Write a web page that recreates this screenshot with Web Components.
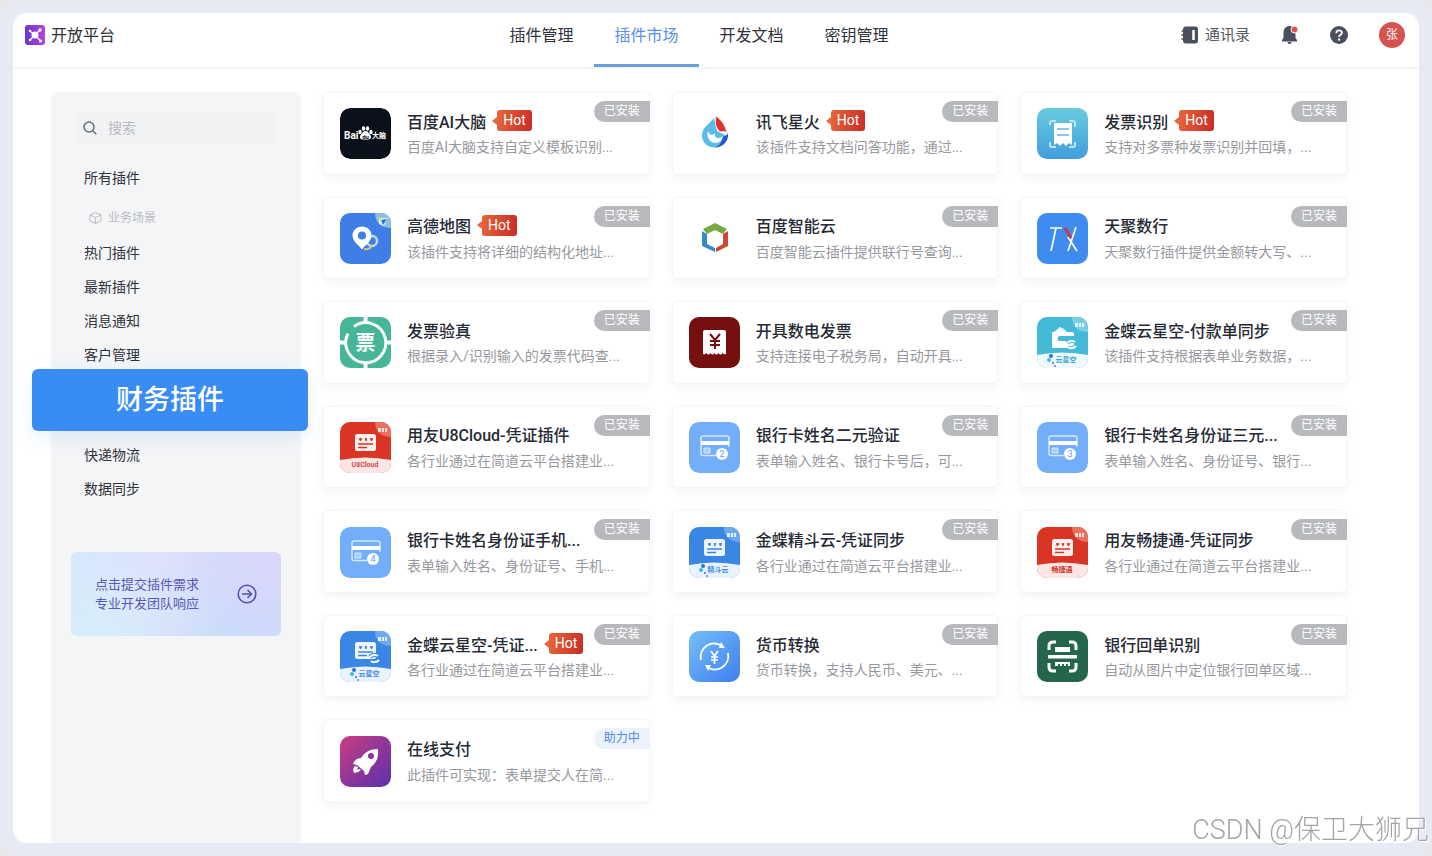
<!DOCTYPE html>
<html lang="zh-CN">
<head>
<meta charset="utf-8">
<meta name="viewport" content="width=device-width, initial-scale=1">
<title>开放平台 - 插件市场</title>
<style>
    * {
        box-sizing: border-box;
    }
    html {
        background-color: #e8e8ea;
    }
    body {
        --blue: #3a8cf5;
        --link: #5a90e6;
        --ink: #30333b;
        --muted: #97999e;
        margin: 0;
        font-family: Roboto, "Noto Sans CJK SC", sans-serif;
        color: var(--ink);
    }
</style>
</head>
<body>
<open-platform></open-platform>

<script>
// the reset names native tags only: a "*" rule would win over the :host rules of nested elements
const baseStyle = `
    * {
        box-sizing: border-box;
    }
    h1, h3, p, ul, li, a, input, button {
        margin: 0;
        padding: 0;
    }
    a {
        color: inherit;
        text-decoration: none;
    }
    button {
        border: none;
        background: none;
        font: inherit;
        color: inherit;
        cursor: pointer;
    }
    svg {
        display: block;
    }
`;

// parts shared by several plugin icons
const cornerTag = (color) => `
    <path d="M35 0H51V15C42 15 35 10 35 0Z" fill="${color}"/>
    <path d="M38 6h3v4h-3zM42 6h2v4h-2zM45 6h2v4h-2z" fill="#fff" opacity=".8"/>
`;

const footer = (fill, color, text, logo) => `
    <path d="M0 38Q25 33 51 38V51H0Z" fill="${fill}"/>
    ${logo ? `
        <circle cx="14" cy="39" r="2" fill="#2c6fe8"/>
        <circle cx="12" cy="43" r="2" fill="#3cc0dd"/>
        <circle cx="16" cy="46" r="1" fill="#2c6fe8"/>
        <circle cx="18" cy="49" r="1" fill="#8a6cf0"/>
        <text x="29" y="45" font-size="7" font-weight="700" text-anchor="middle" fill="${color}">${text}</text>
    ` : `
        <text x="25" y="45" font-size="7" font-weight="700" text-anchor="middle" fill="${color}">${text}</text>
    `}
`;

const voucher = (ink) => `
    <rect x="15" y="12" width="21" height="17" rx="2.500" fill="#fff" opacity=".92"/>
    <path d="M19 17h3M25 17h2M30 17h3M20.500 16v3M26 16v3M31.500 16v3M18 22h15M18 25.500h9" stroke="${ink}" stroke-width="1.500"/>
`;

const bankCard = (number) => `
    <rect width="51" height="51" rx="9" fill="#72aefa"/>
    <path d="M27 33.500H14a2 2 0 0 1-2-2V16a2 2 0 0 1 2-2h24a2 2 0 0 1 2 2v9" fill="none" stroke="#d6e8ff" stroke-width="1.500"/>
    <path d="M12 19h28v4H12z" fill="#fff"/>
    <path d="M15 26h6v5h-6z" fill="#a9cffc" stroke="#d6e8ff"/>
    <circle cx="33" cy="32" r="6" fill="#fff"/>
    <text x="33" y="35" font-size="9" text-anchor="middle" fill="#5c9df5">${number}</text>
`;

const icons = {
    brain: `
        <rect width="51" height="51" rx="10" fill="#0b111b"/>
        <text x="4" y="31" font-size="10" font-weight="700" fill="#fff">Bai</text>
        <ellipse cx="20" cy="24" rx="1.700" ry="2.300" fill="#fff"/>
        <ellipse cx="23.500" cy="20.500" rx="1.700" ry="2.300" fill="#fff"/>
        <ellipse cx="27.500" cy="20.500" rx="1.700" ry="2.300" fill="#fff"/>
        <ellipse cx="31" cy="24" rx="1.700" ry="2.300" fill="#fff"/>
        <path d="M25.500 23c2.500 0 3 2 4.500 3.500s1.500 5-1.500 5h-6c-3 0-3-3.500-1.500-5S23 23 25.500 23Z" fill="#fff"/>
        <text x="25.500" y="30.500" font-size="6" font-weight="700" text-anchor="middle" fill="#0b111b">du</text>
        <text x="32" y="30" font-size="7" font-weight="700" fill="#fff">大脑</text>
    `,
    map: `
        <rect width="51" height="51" fill="#3e7ee6"/>
        <path d="M35 0H51V15C42 15 35 10 35 0Z" fill="#8dbfe2"/>
        <path d="M39 5h9l-4 8-5-2z" fill="#d8f0d8"/>
        <path d="M41 7l6-1-4 6z" fill="#2f74d8"/>
        <path d="M38 5l3-1v3z" fill="#e8d34e"/>
        <circle cx="32" cy="28" r="5" fill="none" stroke="#c3daff" stroke-width="2.500"/>
        <path d="M24 36q5 1 8-3" fill="none" stroke="#d9c873" stroke-width="2"/>
        <path d="M22 13.500c5.500 0 9.500 4 9.500 9 0 6-6 9-9.500 14-3.500-5-9.500-8-9.500-14 0-5 4-9 9.500-9Z" fill="#fff"/>
        <circle cx="22" cy="22.500" r="4" fill="#3e7ee6"/>
    `,
    spark: `
        <path d="M25 10C19 17 13 20 13 27.500C13 35 19 39.500 26 39.500C33 39.500 38 34 38 28L28 23Z" fill="#58bdec"/>
        <path d="M39 25c1 8-5 14.500-13 14.500 5-2 7-5 7-11 3 0 5-1 6-3.500Z" fill="#2456cc"/>
        <path d="M19 23c1 4 4 5 7 2-1 5 3 7 8 3 0 4-4 7-7 7-6 0-10-6-8-12Z" fill="#fff"/>
        <path d="M27 8c5 4 9 8 11 17-3-3-6 0-8-2-2-3-5-6-3-15Z" fill="#df322c" stroke="#fff" stroke-width=".7"/>
    `,
    cloud: `
        <path d="M26 10l12 6-4 5-8-4-8 4-4-5z" fill="#77a941"/>
        <path d="M13 18l5 3v10l8 4v4L13 33z" fill="#338cc8"/>
        <path d="M39 18l-5 3v10l-7 4v4l12-6z" fill="#cb4a32"/>
    `,
    invoice: `
        <defs>
            <linearGradient id="g" x2="0" y2="1"><stop stop-color="#67cbdc"/><stop offset="1" stop-color="#419edd"/></linearGradient>
        </defs>
        <rect width="51" height="51" rx="8" fill="url(#g)"/>
        <path d="M13 17v-2q0-2 2-2h4M32 13h4q2 0 2 2v4M38 34v3q0 2-2 2h-4M19 39h-4q-2 0-2-2v-3" fill="none" stroke="#b9e6f2" stroke-width="2"/>
        <path d="M17 15h18v22l-3-2-3 3-3-3-3 3-3-3-3 2z" fill="#fff"/>
        <path d="M20 21h12M20 27h12" stroke="#62b8e0" stroke-width="1.500"/>
    `,
    tx: `
        <rect width="51" height="51" fill="#3e8cf0"/>
        <path d="M13 15h12M19 15l-5 23M39 14l-8 24M31 24l9 14" fill="none" stroke="#fff" stroke-width="1.700"/>
        <path d="M28 15l6 10" stroke="#c8384c" stroke-width="3"/>
    `,
    verify: `
        <rect width="51" height="51" fill="#47b597"/>
        <path d="M14 9.500a20 20 0 1 1-6 7" fill="none" stroke="#fff" stroke-width="3"/>
        <path d="M25.500 0v6M25.500 45v6M0 25.500h6M45 25.500h6" stroke="#fff" stroke-width="4"/>
        <text x="25.500" y="33" font-size="20" font-weight="700" text-anchor="middle" fill="#fff">票</text>
    `,
    issue: `
        <rect width="51" height="51" fill="#76100e"/>
        <path d="M16 13h19q2 0 2 2v22q-2 1-3.500-1-2 3-4 0-2 3-4 0-2 3-4 0-2 3-4 0-1.500 2-3.500 1V15q0-2 2-2Z" fill="#fff"/>
        <path d="M21 17l5 6 5-6M26 23v9M21 24h10M21 28h10" fill="none" stroke="#76100e" stroke-width="2"/>
    `,
    payment: `
        <rect width="51" height="51" fill="#45bad8"/>
        ${cornerTag("#79d0e5")}
        <path d="M17 15l6-5 4 2 3 3z" fill="#e5f8fc"/>
        <path d="M15 15h20q2 0 2 2v2H22q-3 3 0 5h15v5q0 2-2 2H15z" fill="#fff"/>
        <path d="M30 26q4-4 8-1M39 29q-4 4-8 1" fill="none" stroke="#45bad8" stroke-width="4"/>
        <path d="M30 26q4-4 8-1M39 29q-4 4-8 1" fill="none" stroke="#fff" stroke-width="2"/>
        ${footer("#eefafd", "#43a9d9", "云星空", true)}
    `,
    u8: `
        <rect width="51" height="51" fill="#da3424"/>
        ${cornerTag("#e9705f")}
        ${voucher("#da3424")}
        ${footer("#fbe6e6", "#d94a44", "U8Cloud", false)}
    `,
    card2: bankCard(2),
    card3: bankCard(3),
    card4: bankCard(4),
    jdy: `
        <rect width="51" height="51" fill="#3a86e5"/>
        ${cornerTag("#71a9ee")}
        ${voucher("#3a86e5")}
        ${footer("#eaf3fd", "#3f8be8", "精斗云", true)}
    `,
    cjt: `
        <rect width="51" height="51" fill="#da3424"/>
        ${cornerTag("#e9705f")}
        ${voucher("#da3424")}
        ${footer("#fbe6e6", "#d8302a", "畅捷通", false)}
    `,
    galaxy: `
        <rect width="51" height="51" fill="#3a86e5"/>
        ${cornerTag("#71a9ee")}
        <g transform="translate(0 -1)">${voucher("#3a86e5")}</g>
        <path d="M30 26q4-4 8-1M39 29q-4 4-8 1" fill="none" stroke="#3a86e5" stroke-width="4"/>
        <path d="M30 26q4-4 8-1M39 29q-4 4-8 1" fill="none" stroke="#fff" stroke-width="2"/>
        ${footer("#eaf3fd", "#4a8df0", "云星空", true)}
    `,
    currency: `
        <defs>
            <linearGradient id="g" x2="1" y2="1"><stop stop-color="#74bef8"/><stop offset="1" stop-color="#3f7ff0"/></linearGradient>
        </defs>
        <rect width="51" height="51" fill="url(#g)"/>
        <path d="M12 29a13.500 13.500 0 0 1 21-14M39 22a13.500 13.500 0 0 1-21 14" fill="none" stroke="#fff" stroke-width="2"/>
        <path d="M32 11l4 6h-6zM19 40l-3-6h6z" fill="#fff"/>
        <path d="M22 20l3.500 5 3.500-5M25.500 25v8M22 26h7M22 29h7" fill="none" stroke="#fff" stroke-width="1.700"/>
    `,
    receipt: `
        <rect width="51" height="51" fill="#24664b"/>
        <path d="M12 19v-4q0-4 4-4h3M32 11h3q4 0 4 4v4M39 32v4q0 4-4 4h-3M19 40h-3q-4 0-4-4v-4" fill="none" stroke="#fff" stroke-width="3"/>
        <path d="M11 24h29v3.500H11zM18 16h15v5H18zM18 31h15v4h-2v-2h-2v2h-2v-2h-2v2h-2v-2h-2v2h-3z" fill="#fff"/>
    `,
    rocket: `
        <defs>
            <linearGradient id="g" x2="1" y2="1"><stop stop-color="#cb3d80"/><stop offset=".55" stop-color="#8b3699"/><stop offset="1" stop-color="#5832b0"/></linearGradient>
        </defs>
        <rect width="51" height="51" fill="url(#g)"/>
        <path d="M38 13c1 9-2 14-7 18l-3 7-3 1-1-4-7-6-4-1q2-6 8-6c4-6 9-9 17-9Z" fill="#fff"/>
        <circle cx="31" cy="20" r="3" fill="#8b3699"/>
        <path d="M15 30q-3 3-1 7 4 0 7-3l-2-1-2 1 1-3z" fill="#fff"/>
    `,
};

class PluginIcon extends HTMLElement {
    constructor() {
        super();
        this.attachShadow({ mode: "open" });
    }

    connectedCallback() {
        this.shadowRoot.innerHTML = `
            <style>
                ${baseStyle}
                :host {
                    display: block;
                    flex: none;
                    width: 51px;
                    height: 51px;
                    border-radius: 10px;
                    overflow: hidden;
                }
            </style>
            <svg viewBox="0 0 51 51" width="51" height="51" aria-hidden="true">
                ${icons[this.getAttribute("name")]}
            </svg>
        `;
    }
}

customElements.define("plugin-icon", PluginIcon);

class HotTag extends HTMLElement {
    constructor() {
        super();
        this.attachShadow({ mode: "open" }).innerHTML = `
            <style>
                ${baseStyle}
                :host {
                    display: flex;
                    align-items: center;
                    flex: none;
                    color: white;
                    font-size: 14px;
                    font-weight: 400;
                    line-height: 21px;
                }
                :host::before {
                    content: "";
                    border: 4px solid transparent;
                    border-left: none;
                    border-right: 5px solid #e4693c;
                }
                span {
                    padding: 0 6px;
                    border-radius: 3px;
                    background: linear-gradient(100deg, #e5673a, #c92c26);
                }
            </style>
            <span><slot></slot></span>
        `;
    }
}

customElements.define("hot-tag", HotTag);

class PluginCard extends HTMLElement {
    constructor() {
        super();
        this.attachShadow({ mode: "open" });
    }

    connectedCallback() {
        this.shadowRoot.innerHTML = `
            <style>
                ${baseStyle}
                :host {
                    position: relative;
                    display: flex;
                    align-items: center;
                    gap: 16px;
                    min-width: 0;
                    padding: 1px 16px 0;
                    border: 1px solid #f4f5f6;
                    border-radius: 5px;
                    background-color: white;
                    box-shadow: 0 3px 8px rgba(40, 44, 60, 0.06);
                }
                .text {
                    flex: 1;
                    min-width: 0;
                }
                .head {
                    display: flex;
                    align-items: center;
                    gap: 6px;
                    height: 27px;
                    color: #262a35;
                    font-size: 16px;
                    font-weight: 500;
                    white-space: nowrap;
                }
                .text p {
                    overflow: hidden;
                    color: var(--muted);
                    font-size: 14px;
                    line-height: 26px;
                    white-space: nowrap;
                }
                .badge {
                    position: absolute;
                    top: 8px;
                    right: -1px;
                    padding: 0 10px;
                    border-radius: 11px 0 0 11px;
                    background-color: #b7b9bc;
                    color: white;
                    font-size: 12px;
                    line-height: 21px;
                }
                :host([status="助力中"]) .badge {
                    background-color: #ebf2fe;
                    color: #4c86ee;
                }
            </style>
            <plugin-icon name="${this.getAttribute("icon")}"></plugin-icon>
            <div class="text">
                <div class="head"><slot name="title"></slot><slot name="tag"></slot></div>
                <p><slot></slot></p>
            </div>
            <span class="badge">${this.getAttribute("status")}</span>
        `;
    }
}

customElements.define("plugin-card", PluginCard);

const plugins = [
    { icon: "brain", title: "百度AI大脑", text: "百度AI大脑支持自定义模板识别...", hot: true },
    { icon: "spark", title: "讯飞星火", text: "该插件支持文档问答功能，通过...", hot: true },
    { icon: "invoice", title: "发票识别", text: "支持对多票种发票识别并回填，...", hot: true },
    { icon: "map", title: "高德地图", text: "该插件支持将详细的结构化地址...", hot: true },
    { icon: "cloud", title: "百度智能云", text: "百度智能云插件提供联行号查询..." },
    { icon: "tx", title: "天聚数行", text: "天聚数行插件提供金额转大写、..." },
    { icon: "verify", title: "发票验真", text: "根据录入/识别输入的发票代码查..." },
    { icon: "issue", title: "开具数电发票", text: "支持连接电子税务局，自动开具..." },
    { icon: "payment", title: "金蝶云星空-付款单同步", text: "该插件支持根据表单业务数据，..." },
    { icon: "u8", title: "用友U8Cloud-凭证插件", text: "各行业通过在简道云平台搭建业..." },
    { icon: "card2", title: "银行卡姓名二元验证", text: "表单输入姓名、银行卡号后，可..." },
    { icon: "card3", title: "银行卡姓名身份证三元...", text: "表单输入姓名、身份证号、银行..." },
    { icon: "card4", title: "银行卡姓名身份证手机...", text: "表单输入姓名、身份证号、手机..." },
    { icon: "jdy", title: "金蝶精斗云-凭证同步", text: "各行业通过在简道云平台搭建业..." },
    { icon: "cjt", title: "用友畅捷通-凭证同步", text: "各行业通过在简道云平台搭建业..." },
    { icon: "galaxy", title: "金蝶云星空-凭证...", text: "各行业通过在简道云平台搭建业...", hot: true },
    { icon: "currency", title: "货币转换", text: "货币转换，支持人民币、美元、..." },
    { icon: "receipt", title: "银行回单识别", text: "自动从图片中定位银行回单区域..." },
    { icon: "rocket", title: "在线支付", text: "此插件可实现：表单提交人在简...", status: "助力中" },
];

class PluginGrid extends HTMLElement {
    constructor() {
        super();
        this.attachShadow({ mode: "open" });
    }

    connectedCallback() {
        this.shadowRoot.innerHTML = `
            <style>
                ${baseStyle}
                :host {
                    display: grid;
                    grid-template-columns: repeat(3, minmax(0, 1fr));
                    grid-auto-rows: minmax(80px, 1fr);
                    gap: 22px;
                }
                h3 {
                    font-size: 16px;
                    font-weight: 500;
                }
            </style>
            ${plugins.map((plugin) => `
                <plugin-card icon="${plugin.icon}" status="${plugin.status || "已安装"}">
                    <h3 slot="title">${plugin.title}</h3>
                    ${plugin.hot ? `<hot-tag slot="tag">Hot</hot-tag>` : ""}
                    ${plugin.text}
                </plugin-card>
            `).join("")}
        `;
    }
}

customElements.define("plugin-grid", PluginGrid);

class PlatformHeader extends HTMLElement {
    constructor() {
        super();
        this.attachShadow({ mode: "open" });
    }

    connectedCallback() {
        this.shadowRoot.innerHTML = `
            <style>
                ${baseStyle}
                :host {
                    display: grid;
                    grid-template-columns: 464fr 420px 496fr;
                    padding: 0 14px 0 12px;
                    border-bottom: 2px solid #f3f4f5;
                    font-size: 16px;
                    line-height: 45px;
                }
                .brand {
                    display: flex;
                    align-items: center;
                    gap: 6px;
                    height: 44px;
                    font-size: 16px;
                    font-weight: 400;
                }
                nav {
                    display: grid;
                    grid-template-columns: repeat(4, 1fr);
                }
                nav a {
                    height: 54px;
                    border-bottom: 3px solid transparent;
                    text-align: center;
                }
                nav a.active {
                    border-color: #6d9ddd;
                    color: var(--link);
                }
                .tools {
                    display: flex;
                    align-items: center;
                    justify-content: flex-end;
                    gap: 31px;
                    height: 44px;
                }
                .contacts {
                    display: flex;
                    align-items: center;
                    gap: 6px;
                    color: #555960;
                    font-size: 15px;
                }
                .avatar {
                    width: 26px;
                    height: 26px;
                    border-radius: 50%;
                    background-color: #d75350;
                    color: white;
                    font-size: 12px;
                    line-height: 26px;
                }
            </style>
            <h1 class="brand">
                <svg width="20" height="20" viewBox="0 0 20 20" aria-hidden="true">
                    <defs>
                        <linearGradient id="b" x2="1"><stop stop-color="#6a35cc"/><stop offset="1" stop-color="#b545dd"/></linearGradient>
                    </defs>
                    <rect width="20" height="20" rx="3" fill="url(#b)"/>
                    <path d="M5 6l10 9M15 5L5 15" stroke="#fff" stroke-width="1.200"/>
                    <circle cx="10" cy="10" r="3.500" fill="#fff"/>
                    <g fill="#fff"><circle cx="5" cy="6" r="1.300"/><circle cx="15" cy="5" r="1.700"/><circle cx="5" cy="15" r="1.300"/><circle cx="15.500" cy="16" r="1.500"/></g>
                </svg>
                开放平台
            </h1>
            <nav>
                <a href="#manage">插件管理</a>
                <a href="#market" class="active">插件市场</a>
                <a href="#docs">开发文档</a>
                <a href="#keys">密钥管理</a>
            </nav>
            <div class="tools">
                <a class="contacts" href="#contacts">
                    <svg width="18" height="18" viewBox="0 0 18 18" aria-hidden="true">
                        <rect x="2" y="0.500" width="15" height="17" rx="3" fill="#4a4f5e"/>
                        <path d="M0.500 5h3M0.500 9h3M0.500 13h3" stroke="#4a4f5e" stroke-width="1.500"/>
                        <path d="M12.500 4v10" stroke="#fff" stroke-width="2.500"/>
                    </svg>
                    通讯录
                </a>
                <button aria-label="消息">
                    <svg width="18" height="20" viewBox="0 0 18 20" aria-hidden="true">
                        <path d="M8.500 1c4 0 6 3 6 6.500V13l1.500 2v1.500H1V15l1.500-2V7.500C2.500 4 4.500 1 8.500 1Z" fill="#4a4f5e"/>
                        <path d="M6.500 17h4q0 2-2 2t-2-2Z" fill="#4a4f5e"/>
                        <circle cx="13.500" cy="4.500" r="3.500" fill="#e3504f" stroke="#fff"/>
                    </svg>
                </button>
                <button aria-label="帮助">
                    <svg width="18" height="18" viewBox="0 0 18 18" aria-hidden="true">
                        <circle cx="9" cy="9" r="9" fill="#4a4f5e"/>
                        <path d="M6.300 7.200c0-3.800 5.600-3.500 5.600-.4 0 2-2.800 2-2.800 4.200" fill="none" stroke="#fff" stroke-width="1.800"/>
                        <circle cx="9.100" cy="13.500" r="1.200" fill="#fff"/>
                    </svg>
                </button>
                <button class="avatar">张</button>
            </div>
        `;
    }
}

customElements.define("platform-header", PlatformHeader);

class PromoLink extends HTMLElement {
    constructor() {
        super();
        this.attachShadow({ mode: "open" }).innerHTML = `
            <style>
                ${baseStyle}
                :host {
                    display: block;
                }
                a {
                    display: flex;
                    align-items: center;
                    justify-content: space-between;
                    height: 84px;
                    padding: 0 24px;
                    border-radius: 6px;
                    background:
                        radial-gradient(circle at 100% 0, #dcd5fb, transparent 45%),
                        radial-gradient(circle at 10% 100%, #d6eefa, transparent 60%),
                        linear-gradient(120deg, #d6e6fb 0%, #dfe0fa 35%, #cbdcfb 75%);
                    color: #5a58b8;
                    font-size: 13px;
                    line-height: 19px;
                }
            </style>
            <a href="#request">
                <span><slot></slot></span>
                <svg width="20" height="20" viewBox="0 0 20 20" fill="none" stroke="#5552b0" stroke-width="1.600" aria-hidden="true">
                    <circle cx="10" cy="10" r="8.800"/>
                    <path d="M5 10h9.500M10.500 6l4 4-4 4"/>
                </svg>
            </a>
        `;
    }
}

customElements.define("promo-link", PromoLink);

class SideMenu extends HTMLElement {
    constructor() {
        super();
        this.attachShadow({ mode: "open" });
    }

    connectedCallback() {
        this.shadowRoot.innerHTML = `
            <style>
                ${baseStyle}
                :host {
                    display: block;
                    padding: 21px 20px 20px;
                    border-radius: 8px 8px 0 0;
                    background-color: #f4f5f7;
                    font-size: 14px;
                }
                .search {
                    display: flex;
                    align-items: center;
                    gap: 11px;
                    height: 30px;
                    margin: 0 4px 18px;
                    padding: 0 8px;
                    border-radius: 6px;
                    background-color: #f1f2f4;
                }
                .search svg {
                    flex: none;
                }
                .search input {
                    width: 100%;
                    min-width: 0;
                    border: none;
                    outline: none;
                    background: none;
                    font: inherit;
                }
                .search input::placeholder {
                    color: #b9bbc0;
                }
                ul {
                    list-style: none;
                }
                li {
                    padding-left: 13px;
                    line-height: 34px;
                }
                li a {
                    display: block;
                }
                .group {
                    display: flex;
                    align-items: center;
                    gap: 6px;
                    margin: 6px 0 1px;
                    padding-left: 18px;
                    color: #b9bbc0;
                    font-size: 12px;
                }
                .current {
                    position: relative;
                    margin: -3px -27px 7px -39px;
                    padding: 0;
                    border-radius: 6px;
                    background-color: var(--blue);
                    box-shadow: 0 6px 20px rgba(60, 130, 220, 0.12);
                    color: white;
                    font-size: 27px;
                    font-weight: 500;
                    line-height: 62px;
                    text-align: center;
                }
                promo-link {
                    margin-top: 46px;
                }
            </style>
            <label class="search">
                <svg width="14" height="14" viewBox="0 0 14 14" fill="none" stroke="#686c74" stroke-width="1.500" aria-hidden="true">
                    <circle cx="6" cy="6" r="5"/>
                    <path d="M9.700 9.700L13.300 13.300"/>
                </svg>
                <input type="text" placeholder="搜索" aria-label="搜索">
            </label>
            <ul>
                <li><a href="#all">所有插件</a></li>
                <li class="group">
                    <svg width="13" height="12" viewBox="0 0 13 12" fill="none" stroke="#b9bbc0" aria-hidden="true">
                        <path d="M6.500 0.700L12 3v6l-5.500 2.500L1 9V3zM1 3l5.500 2.500L12 3M6.500 5.500v6"/>
                    </svg>
                    业务场景
                </li>
                <li><a href="#popular">热门插件</a></li>
                <li><a href="#latest">最新插件</a></li>
                <li><a href="#notice">消息通知</a></li>
                <li><a href="#customer">客户管理</a></li>
                <li class="current"><a href="#finance" aria-current="page">财务插件</a></li>
                <li><a href="#express">快递物流</a></li>
                <li><a href="#sync">数据同步</a></li>
            </ul>
            <promo-link>点击提交插件需求<br>专业开发团队响应</promo-link>
        `;
    }
}

customElements.define("side-menu", SideMenu);

class OpenPlatform extends HTMLElement {
    constructor() {
        super();
        this.attachShadow({ mode: "open" });
    }

    connectedCallback() {
        this.shadowRoot.innerHTML = `
            <style>
                ${baseStyle}
                :host {
                    display: flex;
                    min-height: 100vh;
                    padding: 13px;
                    border-radius: 20px;
                    background-color: #e7eaf2;
                }
                .window {
                    display: flex;
                    flex-direction: column;
                    flex: 1;
                    min-width: 0;
                    border-radius: 14px;
                    background-color: white;
                }
                main {
                    display: flex;
                    flex: 1;
                    gap: 22px;
                    padding: 23px 72px 0 38px;
                }
                side-menu {
                    flex: 0 0 250px;
                    min-width: 0;
                }
                plugin-grid {
                    flex: 1;
                    min-width: 0;
                    margin-bottom: 41px;
                }
                .watermark {
                    position: fixed;
                    right: 3px;
                    bottom: 6px;
                    color: #a3a5a9;
                    font-size: 27px;
                    font-weight: 300;
                    line-height: 40px;
                    text-shadow: 1px 1px 1px white;
                }
            </style>
            <div class="window">
                <platform-header></platform-header>
                <main>
                    <side-menu></side-menu>
                    <plugin-grid></plugin-grid>
                </main>
            </div>
            <span class="watermark">CSDN @保卫大狮兄</span>
        `;
    }
}

customElements.define("open-platform", OpenPlatform);
</script>
</body>
</html>
